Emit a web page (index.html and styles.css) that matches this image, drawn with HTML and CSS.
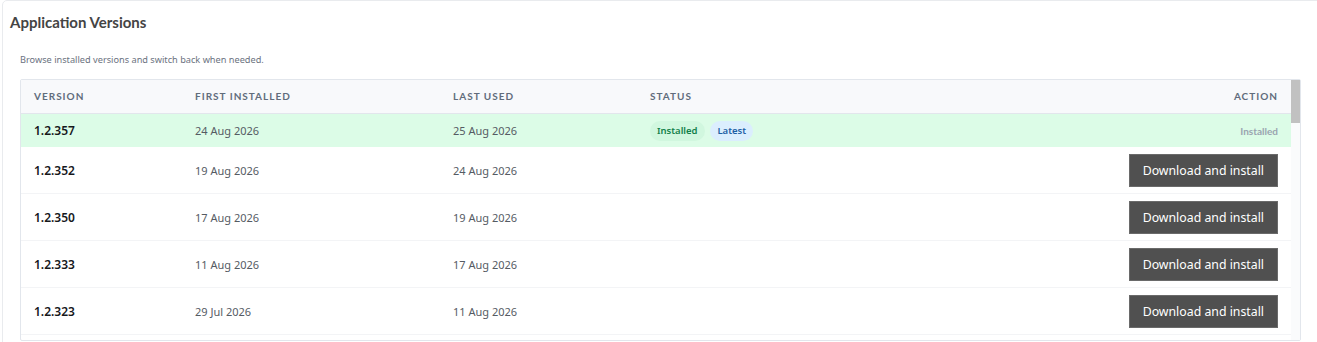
FILE: index.html
```html
<html lang="en">
<head>
    <meta charset="UTF-8">
    <meta name="viewport" content="width=device-width, initial-scale=1.0">
    <title>Application Versions</title>
    <link rel="stylesheet" href="styles.css">
</head>
<body>
    <div class="card">
        <div class="card-header">
            <h2>Application Versions</h2>
        </div>
        <div class="card-body">
            <p class="hint">Browse installed versions and switch back when needed.</p>
            <div class="table-wrap">
                <div class="table-scroll">
                    <table class="versions">
                        <colgroup>
                            <col class="col-version">
                            <col class="col-first">
                            <col class="col-last">
                            <col>
                            <col class="col-action">
                        </colgroup>
                        <thead>
                            <tr>
                                <th>Version</th>
                                <th>First installed</th>
                                <th>Last used</th>
                                <th>Status</th>
                                <th class="right">Action</th>
                            </tr>
                        </thead>
                        <tbody>
                            <tr class="current">
                                <td class="version">1.2.357</td>
                                <td>24 Aug 2026</td>
                                <td>25 Aug 2026</td>
                                <td>
                                    <span class="badge badge-installed">Installed</span>
                                    <span class="badge badge-latest">Latest</span>
                                </td>
                                <td class="right"><span class="action-label">Installed</span></td>
                            </tr>
                            <tr>
                                <td class="version">1.2.352</td>
                                <td>19 Aug 2026</td>
                                <td>24 Aug 2026</td>
                                <td></td>
                                <td class="right"><button>Download and install</button></td>
                            </tr>
                            <tr>
                                <td class="version">1.2.350</td>
                                <td>17 Aug 2026</td>
                                <td>19 Aug 2026</td>
                                <td></td>
                                <td class="right"><button>Download and install</button></td>
                            </tr>
                            <tr>
                                <td class="version">1.2.333</td>
                                <td>11 Aug 2026</td>
                                <td>17 Aug 2026</td>
                                <td></td>
                                <td class="right"><button>Download and install</button></td>
                            </tr>
                            <tr>
                                <td class="version">1.2.323</td>
                                <td>29 Jul 2026</td>
                                <td>11 Aug 2026</td>
                                <td></td>
                                <td class="right"><button>Download and install</button></td>
                            </tr>
                        </tbody>
                    </table>
                </div>
                <div class="scroll-track">
                    <div class="scroll-thumb"></div>
                </div>
            </div>
        </div>
    </div>
</body>
</html>
```

FILE: styles.css
```css
html, body {
    margin: 0;
    padding: 0;
}

body {
    font-family: "Noto Sans", "Open Sans", sans-serif;
    background-color: #ffffff;
    color: #333;
    overflow: hidden;
}

.card {
    margin-left: 2px;
    width: 1328px;
    border: 1px solid #e9ebee;
    border-radius: 5px;
    background: #fff;
}

.card-header {
    padding: 11px 7px 0;
}

.card-header h2 {
    margin: 0;
    font-family: "Lato", sans-serif;
    font-size: 15px;
    line-height: 20px;
    font-weight: 700;
    color: #444444;
}

.card-body {
    padding: 0 30px 12px 17px;
}

.hint {
    margin: 21px 0 12px;
    font-size: 9.2px;
    line-height: 14px;
    color: #6b7280;
}

.table-wrap {
    display: flex;
    height: 260px;
    border: 1px solid #e2e6ec;
    border-radius: 2px;
}

.table-scroll {
    flex: 1;
    overflow: hidden;
}

.scroll-track {
    width: 9px;
    background: #fafbfc;
}

.scroll-thumb {
    height: 43px;
    background: #c1c1c1;
}

.versions {
    width: 100%;
    border-collapse: separate;
    border-spacing: 0;
    table-layout: fixed;
}

.col-version { width: 161px; }
.col-first { width: 258px; }
.col-last { width: 197px; }
.col-action { width: 220px; }

.versions th {
    background: #f8f9fb;
    border-bottom: 1px solid #e2e6ec;
    padding: 8px 13px;
    line-height: 17px;
    text-align: left;
    font-family: "Lato", sans-serif;
    font-size: 10px;
    font-weight: 700;
    letter-spacing: 1px;
    text-transform: uppercase;
    color: #616c7b;
}

.versions td {
    padding: 7px 13px 6px;
    border-bottom: 1px solid #f3f4f6;
    font-size: 11px;
    line-height: 17px;
    color: #555b63;
    vertical-align: middle;
}

.versions .right {
    text-align: right;
}

.versions td.version {
    font-size: 12px;
    font-weight: 600;
    color: #16181c;
}

.versions tr.current td {
    height: 33px;
    box-sizing: border-box;
    background: #dcfce7;
    padding: 0 13px;
    line-height: 20px;
    border-bottom: none;
}

.badge {
    display: inline-block;
    height: 20px;
    line-height: 20px;
    padding: 0 7px;
    border-radius: 10px;
    font-size: 9.5px;
    font-weight: 600;
    vertical-align: top;
}

.badge-installed {
    background: #d1f7df;
    color: #12804a;
}

.badge-latest {
    margin-left: 3px;
    background: #dbeefe;
    color: #1d5fa5;
}

.action-label {
    font-family: "Lato", sans-serif;
    font-size: 10px;
    font-weight: 700;
    color: #9aa4b0;
}

.versions button {
    height: 33px;
    padding: 0 13px;
    background: #505050;
    color: #fff;
    border: 1px solid #6a6a6a;
    border-radius: 0;
    font-family: "Noto Sans", "Open Sans", sans-serif;
    font-size: 12.3px;
    cursor: pointer;
    vertical-align: middle;
}

.versions button:hover {
    background: #3f3f3f;
}
```
